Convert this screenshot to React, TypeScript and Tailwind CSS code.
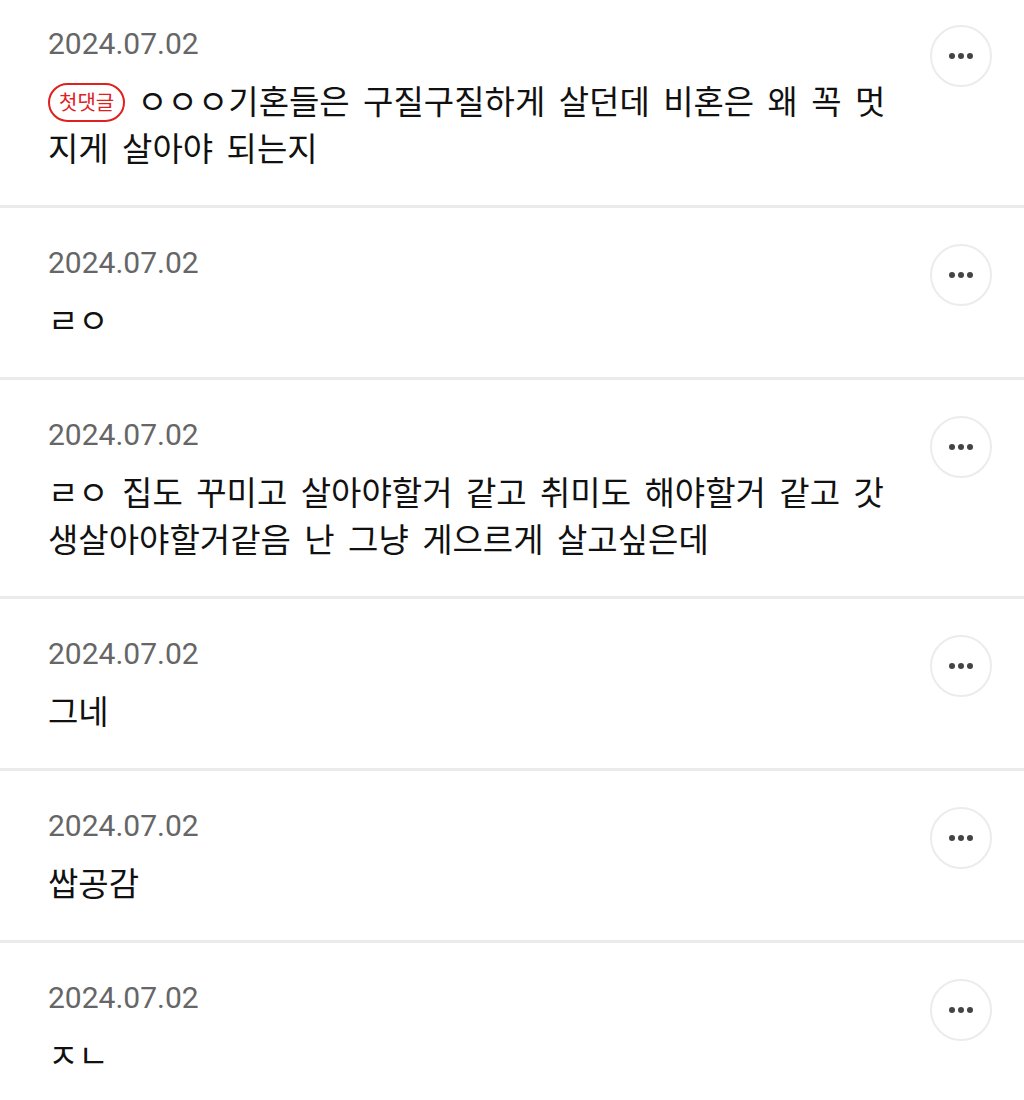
const comments = [
  { date: '2024.07.02', text: 'ㅇㅇㅇ기혼들은 구질구질하게 살던데 비혼은 왜 꼭 멋지게 살아야 되는지', first: true },
  { date: '2024.07.02', text: 'ㄹㅇ' },
  { date: '2024.07.02', text: 'ㄹㅇ 집도 꾸미고 살아야할거 같고 취미도 해야할거 같고 갓생살아야할거같음 난 그냥 게으르게 살고싶은데' },
  { date: '2024.07.02', text: '그네' },
  { date: '2024.07.02', text: '쌉공감' },
  { date: '2024.07.02', text: 'ㅈㄴ' },
];

function MoreButton() {
  return (
    <button className="w-[62px] h-[62px] shrink-0 rounded-full border-2 border-[#ececec] flex items-center justify-center gap-[3px]">
      <span className="w-[6px] h-[6px] rounded-full bg-[#444]" />
      <span className="w-[6px] h-[6px] rounded-full bg-[#444]" />
      <span className="w-[6px] h-[6px] rounded-full bg-[#444]" />
    </button>
  );
}

export default function App() {
  return (
    <div className="bg-white w-[1024px] h-[1100px] overflow-hidden font-['Roboto','Noto_Sans_CJK_KR',sans-serif]">
      <div className="-mt-[11px]">
        {comments.map((c, i) => (
          <div key={i} className="flex pl-[48px] pr-[32px] pt-[36px] pb-[34px] border-b-[3px] border-[#ebebeb]">
            <div className="flex-1 mr-[28px]">
              <p className="text-[30px] leading-[38px] text-[#666]">{c.date}</p>
              <p className="mt-[14px] text-[33px] leading-[47px] [word-spacing:6px] text-[#111] font-['Noto_Sans_CJK_KR',sans-serif]">
                {c.first && (
                  <span className="inline-flex items-center align-[4px] mr-[12px] h-[39px] px-[9px] rounded-full border-2 border-[#e0201e] text-[#e0201e] text-[20px] leading-none [word-spacing:0]">
                    첫댓글
                  </span>
                )}
                {c.text}
              </p>
            </div>
            <MoreButton />
          </div>
        ))}
      </div>
    </div>
  );
}
